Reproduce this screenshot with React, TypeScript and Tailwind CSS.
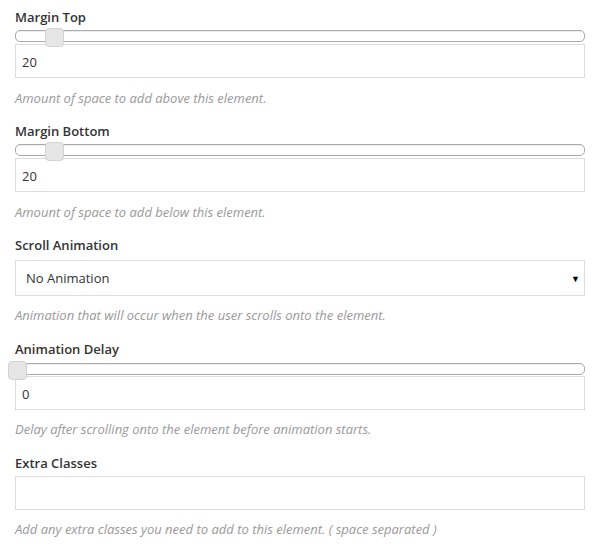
const font = { fontFamily: '"Open Sans", "Liberation Sans", sans-serif' };

const Label = ({ children }: { children: string }) => (
  <div className="h-5 text-[13px] leading-5 font-semibold text-[#333]">{children}</div>
);

const Help = ({ children }: { children: string }) => (
  <div className="h-[18px] text-[13px] leading-[18px] italic text-[#999]">{children}</div>
);

const Slider = ({ left }: { left: number }) => (
  <div className="relative h-3 rounded-[5px] border border-[#aaa] bg-white shadow-[inset_0_1px_1px_rgba(0,0,0,0.08)]">
    <div
      className="absolute top-[-3px] h-[19px] w-[19px] rounded-[4px] border border-[#d3d3d3] bg-[#e6e6e6]"
      style={{ left }}
    />
  </div>
);

const TextBox = ({ value }: { value: string }) => (
  <div className="h-[34px] border border-[#ddd] bg-white px-[6px] pt-px text-[13px] leading-[32px] text-[#333]">
    {value}
  </div>
);

export default function App() {
  return (
    <div className="w-[594px] h-[548px] bg-white pl-[15px] pr-[9px] pt-[7px]" style={font}>
      {/* Margin Top */}
      <Label>Margin Top</Label>
      <div className="mt-[3px]">
        <Slider left={29} />
      </div>
      <div className="mt-[2px]">
        <TextBox value="20" />
      </div>
      <div className="mt-[11px]">
        <Help>Amount of space to add above this element.</Help>
      </div>

      {/* Margin Bottom */}
      <div className="mt-[14px]">
        <Label>Margin Bottom</Label>
      </div>
      <div className="mt-[3px]">
        <Slider left={29} />
      </div>
      <div className="mt-[2px]">
        <TextBox value="20" />
      </div>
      <div className="mt-[11px]">
        <Help>Amount of space to add below this element.</Help>
      </div>

      {/* Scroll Animation */}
      <div className="mt-[14px]">
        <Label>Scroll Animation</Label>
      </div>
      <div className="mt-[5px] flex h-[36px] items-center justify-between border border-[#ddd] bg-white pl-[10px] pr-[4px] pt-[2px] text-[13px] text-[#333]">
        <span>No Animation</span>
        <span className="text-[9px] text-black">▼</span>
      </div>
      <div className="mt-[10px]">
        <Help>Animation that will occur when the user scrolls onto the element.</Help>
      </div>

      {/* Animation Delay */}
      <div className="mt-[15px]">
        <Label>Animation Delay</Label>
      </div>
      <div className="mt-[4px]">
        <Slider left={-8} />
      </div>
      <div className="mt-[1px]">
        <TextBox value="0" />
      </div>
      <div className="mt-[10px]">
        <Help>Delay after scrolling onto the element before animation starts.</Help>
      </div>

      {/* Extra Classes */}
      <div className="mt-[15px]">
        <Label>Extra Classes</Label>
      </div>
      <div className="mt-[3px]">
        <TextBox value="" />
      </div>
      <div className="mt-[10px]">
        <Help>Add any extra classes you need to add to this element. ( space separated )</Help>
      </div>
    </div>
  );
}
